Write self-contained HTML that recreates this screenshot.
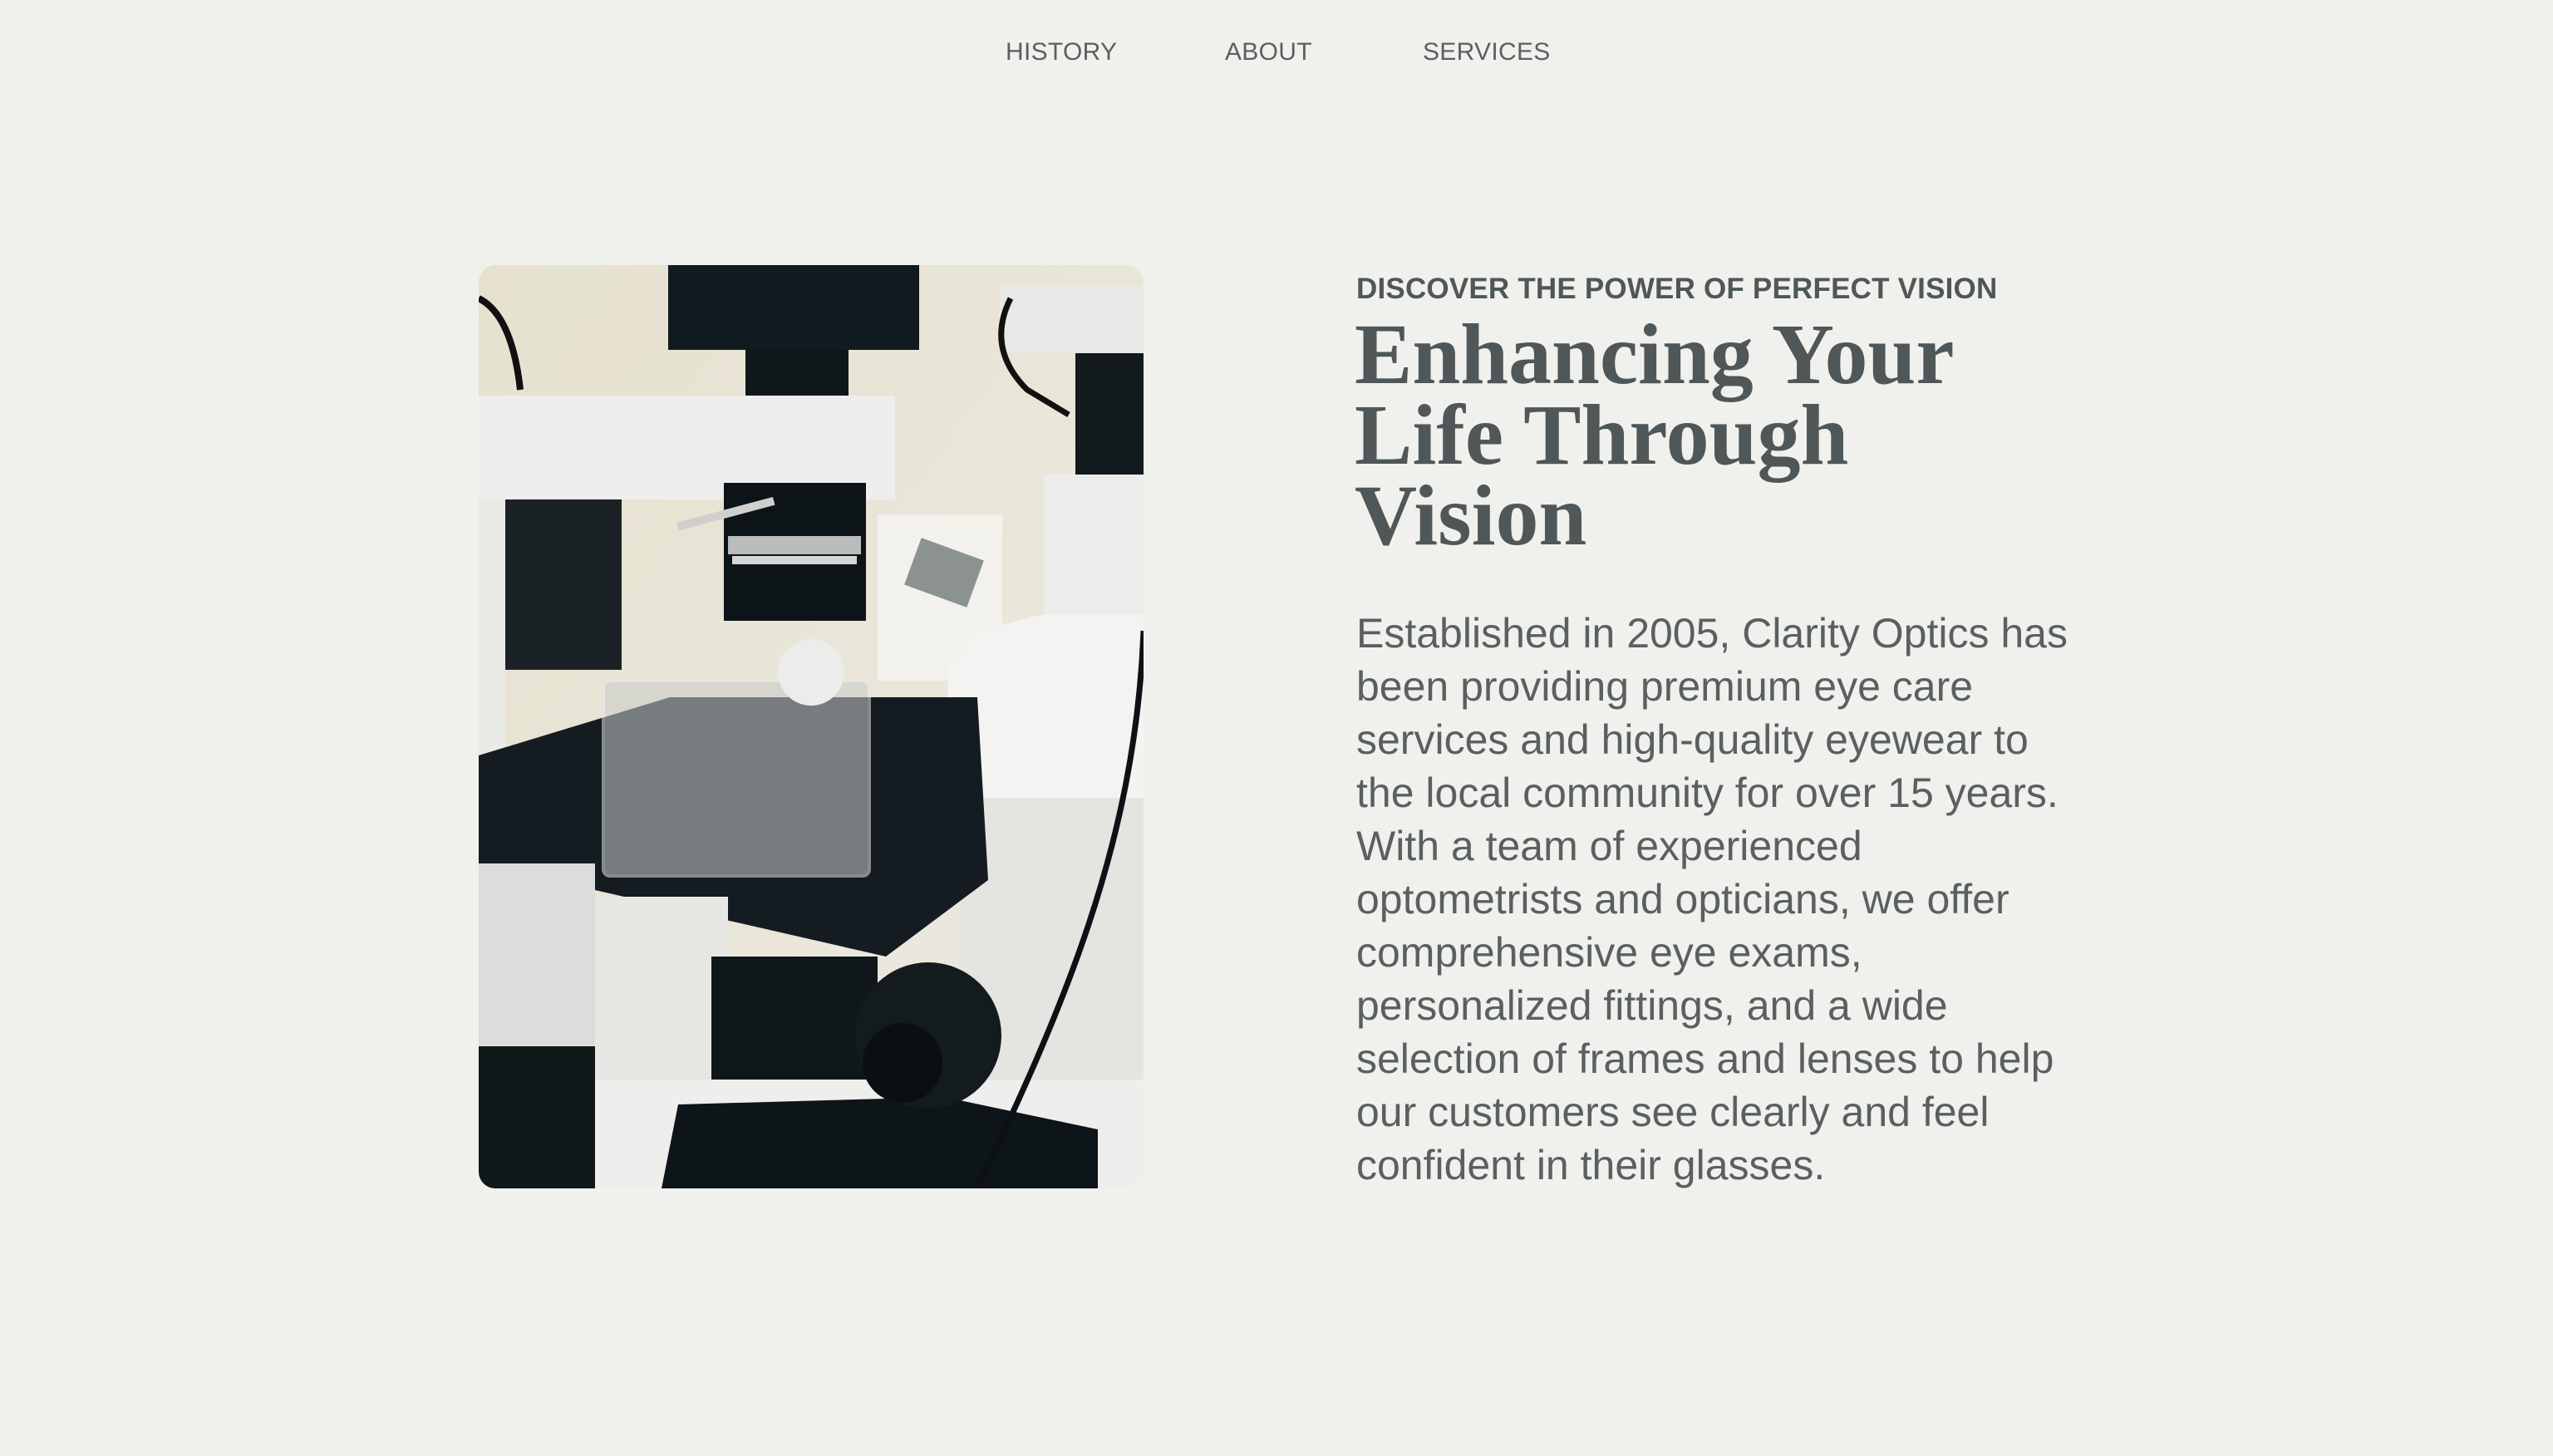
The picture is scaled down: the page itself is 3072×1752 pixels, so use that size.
<!DOCTYPE html>
<html><head><meta charset="utf-8"><style>
html,body{margin:0;padding:0}
body{width:3072px;height:1752px;background:#f0f1ed;position:relative;overflow:hidden;font-family:"Liberation Sans",sans-serif;color:#4f5758}
.nav{position:absolute;top:46px;font-size:30px;color:#5a6061;letter-spacing:0.3px}
.img{position:absolute;left:576px;top:319px;width:800px;height:1111px;border-radius:20px;overflow:hidden}
.eyebrow{position:absolute;left:1632px;top:328px;font-size:35px;font-weight:bold;color:#4f5758;letter-spacing:0.2px}
h1{position:absolute;left:1630px;top:378px;margin:0;font-family:"Liberation Serif",serif;font-weight:bold;font-size:104px;line-height:97px;color:#4f5758;letter-spacing:0px}
p{position:absolute;left:1632px;top:730px;margin:0;width:870px;font-size:50px;line-height:64px;color:#5a6061;font-weight:300}
</style></head><body>
<div class="nav" style="left:1210px">HISTORY</div>
<div class="nav" style="left:1474px">ABOUT</div>
<div class="nav" style="left:1712px">SERVICES</div>
<div class="img"><svg width="800" height="1111" viewBox="0 0 800 1111">
<defs><linearGradient id="bg" x1="0" y1="0" x2="1" y2="1"><stop offset="0" stop-color="#e6e1cf"/><stop offset="1" stop-color="#eceae2"/></linearGradient></defs>
<rect width="800" height="1111" fill="url(#bg)"/>
<rect x="480" y="300" width="150" height="200" fill="#f2f1ec"/>
<rect x="520" y="340" width="80" height="60" fill="#8c9290" transform="rotate(20 560 370)"/>
<rect x="32" y="274" width="140" height="213" fill="#1a2226"/>
<rect x="0" y="274" width="32" height="330" fill="#e9e9e6"/>
<rect x="228" y="0" width="302" height="102" fill="#111a1e"/>
<rect x="321" y="102" width="124" height="92" fill="#0f171b"/>
<path d="M0 40 Q40 60 50 150" stroke="#111" stroke-width="8" fill="none"/>
<rect x="0" y="157" width="501" height="125" fill="#eeeeec"/>
<rect x="295" y="262" width="171" height="166" fill="#0d1418"/>
<rect x="300" y="326" width="160" height="22" fill="#b9bcbb"/>
<rect x="305" y="350" width="150" height="10" fill="#d4d6d5"/>
<rect x="238" y="310" width="120" height="10" fill="#cfcfcd" transform="rotate(-15 238 310)"/>
<rect x="627" y="25" width="173" height="81" fill="#e8e9e6"/>
<rect x="718" y="106" width="82" height="154" fill="#121a1e"/>
<path d="M640 40 Q610 100 660 150 L710 180" stroke="#111" stroke-width="7" fill="none"/>
<rect x="680" y="252" width="120" height="200" fill="#ecedeb"/>
<polygon points="600,440 680,420 800,420 800,641 565,641 565,480" fill="#f3f3f1"/>
<rect x="580" y="641" width="220" height="470" fill="#e4e4e1"/>
<polygon points="0,590 230,520 600,520 613,740 490,832 0,720" fill="#141c21"/>
<rect x="0" y="720" width="140" height="230" fill="#dcdddb"/>
<rect x="140" y="760" width="160" height="220" fill="#e6e6e3"/>
<rect x="280" y="832" width="200" height="150" fill="#0f171b"/>
<rect x="150" y="500" width="320" height="235" rx="8" fill="#c8cbca" opacity="0.55" stroke="#e4e6e5" stroke-width="4"/>
<circle cx="400" cy="490" r="40" fill="#ececea"/>
<rect x="0" y="940" width="140" height="171" fill="#101719"/>
<rect x="140" y="980" width="660" height="131" fill="#eeeeec"/>
<polygon points="220,1111 240,1010 560,1001 745,1040 745,1111" fill="#0e1519"/>
<circle cx="541" cy="927" r="88" fill="#141b1f"/>
<circle cx="510" cy="960" r="48" fill="#0a0f12"/>
<path d="M800 440 C790 700 700 900 600 1111" stroke="#0c1214" stroke-width="7" fill="none"/>
</svg></div>
<div class="eyebrow">DISCOVER THE POWER OF PERFECT VISION</div>
<h1>Enhancing Your<br>Life Through<br>Vision</h1>
<p>Established in 2005, Clarity Optics has been providing premium eye care services and high-quality eyewear to the local community for over 15 years. With a team of experienced optometrists and opticians, we offer comprehensive eye exams, personalized fittings, and a wide selection of frames and lenses to help our customers see clearly and feel confident in their glasses.</p>
</body></html>
